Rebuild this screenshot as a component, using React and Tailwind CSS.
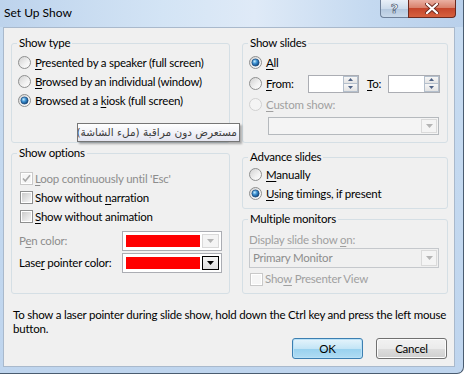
import React from "react";

function U({ children }) {
  return <span className="underline underline-offset-[2px] decoration-1">{children}</span>;
}

function Radio({ checked = false, disabled = false }) {
  return (
    <svg width="13" height="13" viewBox="0 0 13 13" className="shrink-0">
      <circle cx="6.5" cy="6.5" r="6" fill={disabled ? "#f4f4f4" : "url(#rg)"} stroke={disabled ? "#d0d0d0" : "#8e8f8f"} />
      {checked && <circle cx="6.5" cy="6.5" r="3.6" fill="url(#rd)" stroke="#17467a" strokeWidth="0.7" />}
    </svg>
  );
}

function Check({ checked = false, disabled = false }) {
  return (
    <svg width="13" height="13" viewBox="0 0 13 13" className="shrink-0">
      <rect x="0.5" y="0.5" width="12" height="12" fill="#fff" stroke={disabled ? "#c9c9c9" : "#8e8f8f"} />
      <rect x="2" y="2" width="9" height="9" fill={disabled ? "#f6f6f6" : "url(#cg)"} />
      {checked && (
        <path d="M3 6.5 L5.3 9 L10 3.2" fill="none" stroke={disabled ? "#a9a9a9" : "#333"} strokeWidth="1.6" />
      )}
    </svg>
  );
}

function Arrow({ color = "#000" }) {
  return (
    <svg width="7" height="4" viewBox="0 0 7 4">
      <path d="M0 0 L7 0 L3.5 4 Z" fill={color} />
    </svg>
  );
}

function Spin({ className }) {
  return (
    <div className={"flex h-[18px] border border-[#abadb3] bg-white " + className}>
      <div className="flex-1" />
      <div className="flex w-[15px] flex-col">
        <div className="flex flex-1 items-center justify-center border border-[#b4bfcc] bg-[linear-gradient(#f7f7f7,#e3e3e3)]">
          <svg width="5" height="3" viewBox="0 0 5 3"><path d="M0 3 L5 3 L2.5 0 Z" fill="#4d6185" /></svg>
        </div>
        <div className="flex flex-1 items-center justify-center border border-t-0 border-[#b4bfcc] bg-[linear-gradient(#f7f7f7,#e3e3e3)]">
          <svg width="5" height="3" viewBox="0 0 5 3"><path d="M0 0 L5 0 L2.5 3 Z" fill="#4d6185" /></svg>
        </div>
      </div>
    </div>
  );
}

function ColorBox({ active = false }) {
  return (
    <div className="flex h-[20px] w-[100px] items-stretch border border-[#abadb3] bg-white p-[2px]">
      <div className="m-[1px] mr-[2px] flex-1 bg-[#ff0000]" />
      {active ? (
        <div className="flex w-[17px] items-center justify-center border border-black bg-[linear-gradient(#f4f4f4,#dedede)]">
          <Arrow color="#000" />
        </div>
      ) : (
        <div className="flex w-[17px] items-center justify-center border border-[#d9d9d9] bg-[#f4f4f4]">
          <Arrow color="#b4b4b4" />
        </div>
      )}
    </div>
  );
}

function Group({ title, className, children }) {
  return (
    <fieldset className={"rounded-[3px] border border-[#d5dfe5] " + className}>
      <legend className="ml-[5px] px-[2px] leading-[16px]">{title}</legend>
      {children}
    </fieldset>
  );
}

export default function App() {
  return (
    <div className="relative h-[375px] w-[465px] overflow-hidden bg-white font-['Lato','DejaVu_Sans',sans-serif] text-[11.5px] leading-[16px] tracking-[-0.22px] text-black">
      <svg width="0" height="0" className="absolute">
        <defs>
          <linearGradient id="rg" x1="0" y1="0" x2="1" y2="1">
            <stop offset="0" stopColor="#cfcfcf" />
            <stop offset="0.6" stopColor="#f2f2f2" />
            <stop offset="1" stopColor="#ffffff" />
          </linearGradient>
          <radialGradient id="rd" cx="0.38" cy="0.35" r="0.7">
            <stop offset="0" stopColor="#c4ecff" />
            <stop offset="0.45" stopColor="#3b8fd0" />
            <stop offset="1" stopColor="#0f3f74" />
          </radialGradient>
          <linearGradient id="cg" x1="0" y1="0" x2="1" y2="1">
            <stop offset="0" stopColor="#cbcbcb" />
            <stop offset="1" stopColor="#f7f7f7" />
          </linearGradient>
        </defs>
      </svg>

      <div className="flex h-[374px] w-[464px] flex-col rounded-br-[7px] border-b border-r border-[#4a5c70] bg-[linear-gradient(#c8dcf1,#bfd5ee)]">
        {/* Title bar */}
        <div className="flex h-[27px] shrink-0 bg-[linear-gradient(90deg,#bdd3ec,#d3e4f5_35%,#dfeaf7_55%,#c4d9f0_80%,#b9d0eb)]">
          <div className="pl-[4px] pt-[5px] text-[12px] tracking-normal">Set Up Show</div>
          <div className="ml-auto mr-[7px] flex h-[18px]">
            <div className="flex w-[28px] items-center justify-center rounded-bl-[4px] border border-r-0 border-t-0 border-[#6f819a] bg-[linear-gradient(#e9f0f8,#cddcec_50%,#b3c7de_51%,#c9d9ea)]">
              <span className="font-['DejaVu_Sans',sans-serif] text-[13px] font-bold leading-none text-white [-webkit-text-stroke:0.7px_#4c5c74]">?</span>
            </div>
            <div className="flex w-[48px] items-center justify-center rounded-br-[4px] border border-t-0 border-[#6b2a20] bg-[linear-gradient(#eab0a3,#d9826d_45%,#c5462c_50%,#d6613f)]">
              <svg width="14" height="11" viewBox="0 0 14 11">
                <path d="M2 1 L12 10 M12 1 L2 10" stroke="#6b2a20" strokeWidth="4" strokeLinecap="round" />
                <path d="M2 1 L12 10 M12 1 L2 10" stroke="#ffffff" strokeWidth="2.3" strokeLinecap="round" />
              </svg>
            </div>
          </div>
        </div>

        {/* Client */}
        <div className="ml-[3px] flex h-[340px] w-[452px] flex-col border border-[#a9b9cc] bg-[#f0f0f0] pl-[7px] pr-[6px] pt-[7px]">
          <div className="flex gap-[12px]">
            {/* Left column */}
            <div className="flex w-[219px] flex-col gap-[2px]">
              <Group title="Show type" className="h-[108px]">
                <div className="flex flex-col pl-[6px] pt-[2px]">
                  <div className="flex h-[19px] items-center gap-[4px]"><Radio /><span><U>P</U>resented by a speaker (full screen)</span></div>
                  <div className="flex h-[19px] items-center gap-[4px]"><Radio /><span><U>B</U>rowsed by an individual (window)</span></div>
                  <div className="flex h-[19px] items-center gap-[4px]"><Radio checked /><span>Browsed at a <U>k</U>iosk (full screen)</span></div>
                </div>
              </Group>
              <Group title="Show options" className="h-[149px]">
                <div className="flex flex-col pl-[8px] pt-[8px]">
                  <div className="flex h-[19px] items-center gap-[2px] text-[#8d8d8d]"><Check checked disabled /><span><U>L</U>oop continuously until 'Esc'</span></div>
                  <div className="flex h-[19px] items-center gap-[2px]"><Check /><span>Show without <U>n</U>arration</span></div>
                  <div className="flex h-[19px] items-center gap-[2px]"><Check /><span><U>S</U>how without animation</span></div>
                </div>
                <div className="mt-[5px] flex flex-col gap-[2px] pl-[7px]">
                  <div className="flex h-[20px] items-center">
                    <span className="w-[103px] text-[#8d8d8d]">P<U>e</U>n color:</span>
                    <ColorBox />
                  </div>
                  <div className="flex h-[20px] items-center">
                    <span className="w-[103px]">Lase<U>r</U> pointer color:</span>
                    <ColorBox active />
                  </div>
                </div>
              </Group>
            </div>

            {/* Right column */}
            <div className="flex w-[206px] flex-col">
              <Group title="Show slides" className="h-[108px]">
                <div className="flex flex-col pl-[6px] pt-[1px]">
                  <div className="flex h-[21px] items-center gap-[4px]"><Radio checked /><span><U>A</U>ll</span></div>
                  <div className="flex h-[21px] items-center">
                    <Radio />
                    <span className="ml-[4px] w-[42px]"><U>F</U>rom:</span>
                    <Spin className="w-[51px]" />
                    <span className="ml-[8px] w-[21px]"><U>T</U>o:</span>
                    <Spin className="w-[52px]" />
                  </div>
                  <div className="flex h-[21px] items-center gap-[4px] text-[#a0a0a0]"><Radio disabled /><span><U>C</U>ustom show:</span></div>
                  <div className="ml-[19px] mt-[2px] flex h-[18px] w-[171px] border border-[#b5b9bd] bg-[#f4f4f4]">
                    <div className="flex-1" />
                    <div className="my-[1px] mr-[1px] flex w-[16px] items-center justify-center border border-[#dadada] bg-[#f4f4f4]">
                      <Arrow color="#b4b4b4" />
                    </div>
                  </div>
                </div>
              </Group>
              <Group title="Advance slides" className="mt-[6px] h-[60px]">
                <div className="flex flex-col pl-[6px]">
                  <div className="flex h-[19px] items-center gap-[4px]"><Radio /><span><U>M</U>anually</span></div>
                  <div className="flex h-[19px] items-center gap-[4px]"><Radio checked /><span><U>U</U>sing timings, if present</span></div>
                </div>
              </Group>
              <Group title="Multiple monitors" className="mt-[2px] h-[83px]">
                <div className="flex flex-col pl-[6px] pt-[5px]">
                  <div className="text-[#a0a0a0]">Display slide show <U>o</U>n:</div>
                  <div className="flex h-[20px] w-[190px] items-center border border-[#c5c8cc] bg-[#f0f0f0]">
                    <span className="flex-1 pl-[3px] text-[#8d8d8d]">Primary Monitor</span>
                    <div className="my-[1px] mr-[1px] flex h-[16px] w-[16px] items-center justify-center border border-[#dadada] bg-[#f4f4f4]">
                      <Arrow color="#b4b4b4" />
                    </div>
                  </div>
                  <div className="mt-[4px] flex h-[14px] items-center gap-[2px] pl-[1px] text-[#a0a0a0]"><Check disabled /><span>Sho<U>w</U> Presenter View</span></div>
                </div>
              </Group>
            </div>
          </div>

          <div className="mt-[14px] whitespace-nowrap pl-[2px] leading-[14px]">
            To show a laser pointer during slide show, hold down the Ctrl key and press the left mouse
            <br />
            button.
          </div>

          <div className="mt-[2px] flex justify-end gap-[13px] pr-[1px]">
            <button className="flex h-[21px] w-[71px] items-center justify-center rounded-[3px] border border-[#3c7fb1] bg-[linear-gradient(#e5f4fc,#c4e5f6_50%,#98d1ef_51%,#b0dcf3)] shadow-[inset_0_0_0_1px_#b9e1f7]">OK</button>
            <button className="flex h-[21px] w-[71px] items-center justify-center rounded-[3px] border border-[#707070] bg-[linear-gradient(#f2f2f2,#ebebeb_50%,#dddddd_51%,#cfcfcf)] shadow-[inset_0_0_0_1px_#fcfcfc]">Cancel</button>
          </div>
        </div>
      </div>

      {/* Tooltip */}
      <div dir="rtl" className="absolute left-[77px] top-[123px] flex h-[19px] w-[163px] items-center overflow-hidden whitespace-nowrap border border-[#767676] bg-[linear-gradient(#ffffff,#e4e5f0)] px-[2px] font-['DejaVu_Sans',sans-serif] text-[10.5px] leading-none tracking-[-0.1px] text-[#3c3c3c] shadow-[2px_2px_2px_rgba(0,0,0,0.3)]">
        مستعرض دون مراقبة (ملء الشاشة)
      </div>
    </div>
  );
}
